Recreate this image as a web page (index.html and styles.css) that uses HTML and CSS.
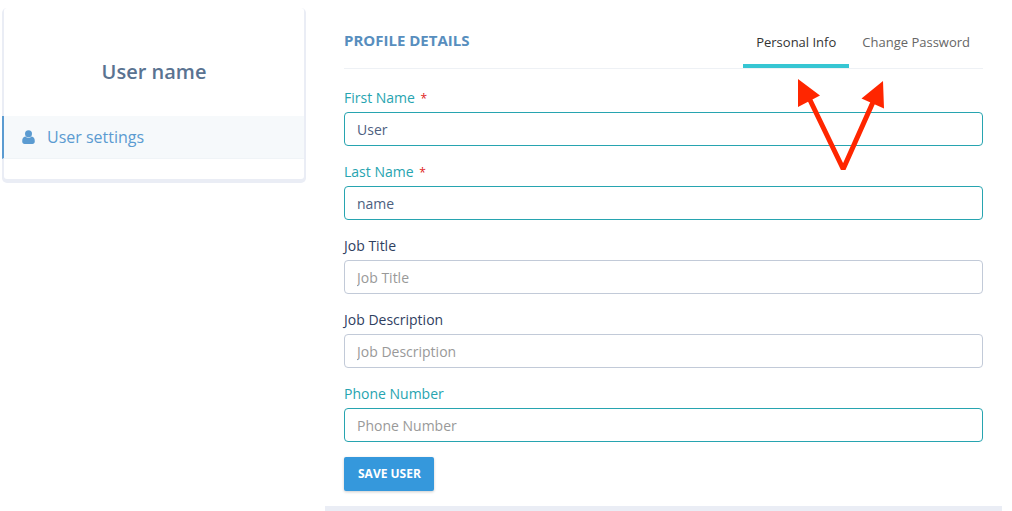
FILE: index.html
```html
<!DOCTYPE html>
<html lang="en">
<head>
<meta charset="utf-8">
<title>User profile</title>
<link rel="stylesheet" href="styles.css">
</head>
<body>
<div class="page">
  <aside class="sidebar">
    <h2 class="sidebar-name">User name</h2>
    <nav>
      <a class="sidebar-link" href="#settings">
        <svg class="user-icon" viewBox="0 0 13 14" aria-hidden="true"><path d="M3.4 6.600Q4.600 7.800 6.500 7.800T9.600 6.600C11.800 6.800 12.800 8.600 12.800 11.300 12.800 13 11.800 13.900 10.400 13.900H2.600C1.200 13.900 .2 13 .2 11.300.2 8.600 1.200 6.800 3.400 6.600Z"/><circle cx="6.500" cy="3.700" r="3.500"/></svg>
        <span>User settings</span>
      </a>
    </nav>
  </aside>
  <main class="panel">
    <header class="panel-header">
      <h1 class="panel-title">Profile Details</h1>
      <nav class="tabs">
        <a class="tab tab-active" href="#info">Personal Info</a>
        <a class="tab" href="#password">Change Password</a>
      </nav>
    </header>
    <form class="form">
      <div class="field field-valid">
        <label for="first">First Name <span class="required">*</span></label>
        <input id="first" type="text" value="User">
      </div>
      <div class="field field-valid">
        <label for="last">Last Name <span class="required">*</span></label>
        <input id="last" type="text" value="name">
      </div>
      <div class="field">
        <label for="title">Job Title</label>
        <input id="title" type="text" placeholder="Job Title">
      </div>
      <div class="field">
        <label for="description">Job Description</label>
        <input id="description" type="text" placeholder="Job Description">
      </div>
      <div class="field field-valid">
        <label for="phone">Phone Number</label>
        <input id="phone" type="tel" placeholder="Phone Number">
      </div>
      <button class="save" type="button">Save User</button>
    </form>
    <svg class="arrows" viewBox="0 0 90 100" aria-hidden="true">
      <path class="arrow-line" d="M14.5 24 48.2 94 78.5 26"/>
      <path class="arrow-head" d="M3 4 25 20.5 3 32ZM88 6 89 33.5 66.5 23.5Z"/>
    </svg>
  </main>
</div>
</body>
</html>
```
FILE: styles.css
```css
* {
  box-sizing: border-box;
}

body {
  margin: 0;
  background: #fff;
  font-family: "Open Sans", "Noto Sans", sans-serif;
  font-size: 14px;
  line-height: 20px;
  color: #2f405f;
}

a {
  color: inherit;
  text-decoration: none;
}

.page {
  display: grid;
  grid-template-columns: 300px 1fr;
  gap: 21px;
  align-items: start;
  padding: 8px 10px 0 4px;
}

.sidebar {
  padding: 48px 0 20px;
  border-radius: 3px;
  background: #fff;
  box-shadow: 0 2px 0 2px #eaedf5;
}

.sidebar-name {
  margin: 0 0 28px;
  font-size: 20px;
  line-height: 32px;
  font-weight: 600;
  text-align: center;
  color: #5a7391;
}

.sidebar-link {
  display: flex;
  align-items: center;
  gap: 12px;
  margin-left: -2px;
  padding: 9px 18px;
  border-left: 2px solid #5b9bd1;
  border-bottom: 1px solid #f0f4f7;
  background: #f6f9fb;
  font-size: 16px;
  line-height: 24px;
  color: #5b9bd1;
}

.user-icon {
  width: 13px;
  height: 14px;
  fill: currentColor;
}

.panel {
  position: relative;
  margin-top: 3px;
  padding: 0 19px 15px;
  border-bottom: 5px solid #eaedf5;
}

.panel-header {
  display: flex;
  justify-content: space-between;
  height: 58px;
  border-bottom: 1px solid #eef1f5;
}

.panel-title {
  margin: 19px 0 0;
  font-size: 15px;
  line-height: 20px;
  font-weight: 700;
  text-transform: uppercase;
  color: #578ebe;
}

.tabs {
  display: flex;
}

.tab {
  padding: 21px 13px 0;
  border-bottom: 4px solid transparent;
  font-size: 13px;
  color: #666;
}

.tab-active {
  border-color: #36c6d3;
  color: #333;
}

.form {
  padding-top: 19px;
}

.field {
  display: grid;
  gap: 4px;
  margin-bottom: 16px;
}

.field:last-of-type {
  margin-bottom: 15px;
}

.field input {
  width: 100%;
  height: 34px;
  padding: 6px 12px;
  border: 1px solid #c2cad8;
  border-radius: 4px;
  background: #fff;
  font: inherit;
  color: #4d6080;
}

.field input::placeholder {
  color: #999;
}

.field-valid {
  color: #27a4b0;
}

.field-valid input {
  border-color: #27a4b0;
}

.required {
  margin-left: 2px;
  font-size: 12px;
  line-height: 1;
  color: #e02222;
}

.save {
  display: block;
  height: 34px;
  padding: 0 13px 0 14px;
  border: 0;
  border-radius: 2px;
  background: #3598dc;
  box-shadow: 0 1px 3px rgba(0, 0, 0, 0.2);
  font: 700 12px/18px "Open Sans", "Noto Sans", sans-serif;
  text-transform: uppercase;
  color: #fff;
}

.arrows {
  position: absolute;
  top: 64px;
  right: 117px;
  width: 90px;
  height: 100px;
  pointer-events: none;
}

.arrow-line {
  fill: none;
  stroke: #ff2600;
  stroke-width: 5;
  stroke-linejoin: bevel;
}

.arrow-head {
  fill: #ff2600;
}
```
